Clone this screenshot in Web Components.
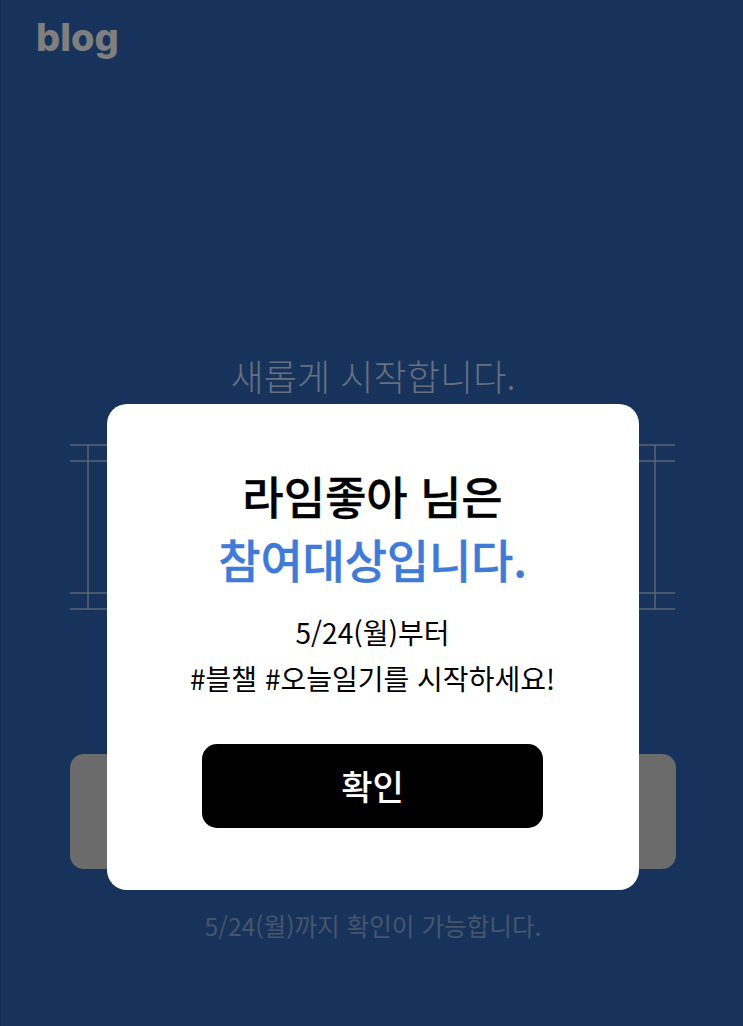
<!DOCTYPE html>
<html lang="ko"><head><meta charset="utf-8"><title>blog</title>
<style>html,body{margin:0;padding:0;background:#17335c}</style></head>
<body>
<x-screen>
  <x-logo>blog</x-logo>
  <x-headline>새롭게 시작합니다.</x-headline>
  <x-frame></x-frame>
  <x-cta></x-cta>
  <x-note>5/24(월)까지 확인이 가능합니다.</x-note>
  <x-modal slot="modal">
    <span slot="name">라임좋아 님은</span>
    <span slot="status">참여대상입니다.</span>
    <span slot="line1">5/24(월)부터</span>
    <span slot="line2">#블챌 #오늘일기를 시작하세요!</span>
    <span slot="action">확인</span>
  </x-modal>
</x-screen>
<script>
const KR='"Noto Sans CJK KR","Noto Sans",sans-serif';
function def(name,css,html){
  customElements.define(name,class extends HTMLElement{
    constructor(){super();const r=this.attachShadow({mode:'open'});r.innerHTML=`<style>${css}</style>${html}`;}
  });
}
def('x-screen',`:host{display:flex;flex-direction:column;position:relative;width:743px;height:1026px;box-sizing:border-box;background:#17335c;box-shadow:inset 1px 0 0 #122b50;overflow:hidden;padding:0 67px 0 70px;font-family:${KR}}`,
 `<slot></slot><slot name="modal"></slot>`);
def('x-logo',`:host{display:block;margin:12px 0 0 -34px;height:51px;font:800 38px/51px Inter,sans-serif;letter-spacing:0;color:#7f7f7f}`,`<slot></slot>`);
def('x-headline',`:host{display:block;margin-top:287px;height:50px;text-align:center;font:300 36px/50px ${KR};letter-spacing:.1px;color:#667080}`,`<slot></slot>`);
def('x-frame',`:host{display:block;margin-top:44px;height:166px;color:#5c6574}svg{display:block}`,
 `<svg width="605" height="166" viewBox="0 0 605 166" fill="none" stroke="currentColor" stroke-width="1.5">
   <path d="M0 1H605M0 17H605M0 149H605M0 165H605M18 1V165M585 1V165"/></svg>`);
def('x-cta',`:host{display:block;margin-top:144px;height:115px;border-radius:14px;background:#6b6b6b}`,``);
def('x-note',`:host{display:block;margin-top:38px;text-align:center;font:400 24.6px/36px ${KR};color:#47556c}`,`<slot></slot>`);
def('x-modal',`:host{position:absolute;left:107px;top:404px;width:532px;height:486px;box-sizing:border-box;padding:60px 96px 62px 95px;border-radius:20px;background:#fff;display:flex;flex-direction:column;align-items:center;text-align:center;color:#000}
 .t{font:500 45px/63px ${KR};white-space:nowrap;letter-spacing:-.1px;-webkit-text-stroke:.3px currentColor}
 .s{color:#3f7bd6;font-size:46px;letter-spacing:-.2px}
 .body{margin-top:19px;font:400 28px/46px ${KR};white-space:nowrap}
 .body div{height:46px}
 .btn{margin-top:auto;width:341px;height:84px;border-radius:15px;background:#000;color:#fff;display:flex;align-items:center;justify-content:center;font:500 34px/1 ${KR}}`,
 `<div class="t"><slot name="name"></slot></div>
  <div class="t s"><slot name="status"></slot></div>
  <div class="body"><div><slot name="line1"></slot></div><div><slot name="line2"></slot></div></div>
  <div class="btn"><slot name="action"></slot></div>`);
</script>
</body></html>
